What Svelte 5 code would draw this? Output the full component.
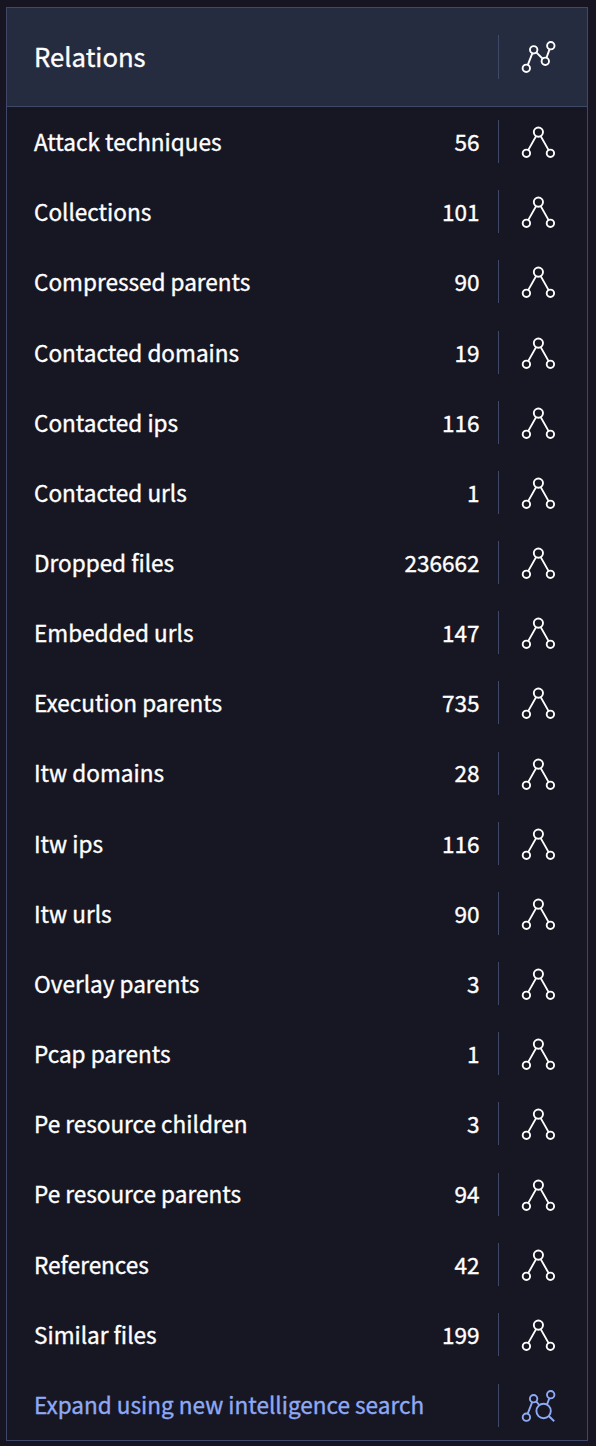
<script>
  const rows = [
    ['Attack techniques', 56],
    ['Collections', 101],
    ['Compressed parents', 90],
    ['Contacted domains', 19],
    ['Contacted ips', 116],
    ['Contacted urls', 1],
    ['Dropped files', 236662],
    ['Embedded urls', 147],
    ['Execution parents', 735],
    ['Itw domains', 28],
    ['Itw ips', 116],
    ['Itw urls', 90],
    ['Overlay parents', 3],
    ['Pcap parents', 1],
    ['Pe resource children', 3],
    ['Pe resource parents', 94],
    ['References', 42],
    ['Similar files', 199]
  ];
</script>

<section class="card">
  <header>
    <h2>Relations</h2>
    <div class="action">
      <svg viewBox="0 0 40 44">
        <circle cx="7.3" cy="33.3" r="3.7" />
        <circle cx="14.7" cy="14.8" r="3.7" />
        <circle cx="26.3" cy="26.3" r="3.7" />
        <circle cx="31.8" cy="10.7" r="3.7" />
        <path d="M8.8 29.8 13.3 18.3M17.3 17.4 23.7 23.7M27.5 22.8 30.6 14.1" />
      </svg>
    </div>
  </header>
  <ul>
    {#each rows as [label, count]}
      <li>
        <span class="label">{label}</span>
        <span class="count">{count}</span>
        <div class="action">
          <svg viewBox="0 0 40 44">
            <circle cx="19.4" cy="12.1" r="4.6" />
            <circle cx="7.4" cy="33.3" r="3.7" />
            <circle cx="31.4" cy="33.3" r="3.7" />
            <path d="M17.1 16.1 9.2 30.1M21.7 16.1 29.6 30.1" />
          </svg>
        </div>
      </li>
    {/each}
    <li class="expand">
      <span class="label">Expand using new intelligence search</span>
      <div class="action">
        <svg viewBox="0 0 40 44">
          <circle cx="7.4" cy="33.2" r="3.7" />
          <circle cx="14.6" cy="14.7" r="3.7" />
          <circle cx="31.7" cy="10.7" r="3.7" />
          <circle cx="24.6" cy="27" r="7.2" />
          <path d="M8.7 29.7 13.2 18.2M17.2 17.3 20.2 21M28 20.5 30.4 14.2M29.8 32 35.2 37.2" />
        </svg>
      </div>
    </li>
  </ul>
</section>

<style>
  :global(body) {
    background: #171521;
  }
  .card {
    box-sizing: border-box;
    width: 582px;
    height: 1434px;
    margin: 7px 0 0 6px;
    border: 1px solid #3f4967;
    background: #171723;
    color: #fff;
    font-family: 'Noto Sans CJK SC', sans-serif;
    font-size: 22.56px;
    font-weight: 400;
    -webkit-text-stroke: 0.35px currentColor;
    display: flex;
    flex-direction: column;
  }
  header {
    height: 98px;
    flex: none;
    display: flex;
    align-items: center;
    background: #262c3f;
    border-bottom: 1px solid #3f4967;
    padding-left: 27px;
  }
  h2 {
    flex: 1;
    margin: 0 0 2px;
    font-size: 25.7px;
    line-height: 36px;
    font-weight: 400;
  }
  ul {
    flex: 1;
    margin: 0;
    padding: 0;
    list-style: none;
    display: flex;
    flex-direction: column;
  }
  li {
    flex: 1;
    display: flex;
    align-items: center;
    padding-left: 27px;
    line-height: 34px;
    white-space: nowrap;
  }
  .label {
    flex: 1;
    padding-bottom: 2px;
  }
  .count {
    margin-right: 18.5px;
    padding-bottom: 2px;
  }
  .action {
    box-sizing: border-box;
    width: 89px;
    height: 43px;
    flex: none;
    margin-bottom: 0.8px;
    border-left: 1px solid #3f4967;
    padding-left: 20px;
  }
  header .action {
    height: 44px;
    margin-bottom: 0;
  }
  svg {
    display: block;
    width: 40px;
    height: 44px;
    fill: none;
    stroke: currentColor;
    stroke-width: 1.9;
  }
  .expand {
    color: #8ea9f5;
  }
  .expand .action {
    margin-bottom: -0.8px;
  }
</style>
